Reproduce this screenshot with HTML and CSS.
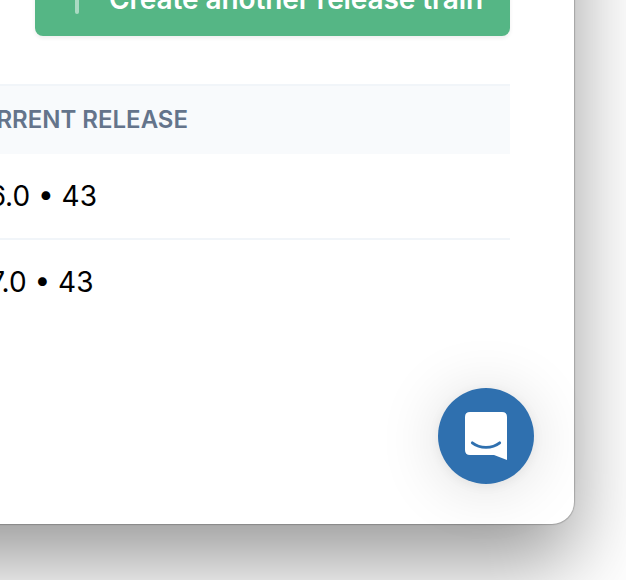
FILE: index.html
```html
<!DOCTYPE html>
<html lang="en">
<head>
<meta charset="utf-8">
<title>Release trains</title>
<link rel="stylesheet" href="styles.css">
</head>
<body>
<main class="window">
  <button class="create"><span class="plus"></span><span class="create-label">Create another release train</span></button>
  <section class="table">
    <div class="row head"><span class="cell cell-head">CURRENT RELEASE</span></div>
    <div class="row"><span class="cell cell-first">6.0 • 43</span></div>
    <div class="row last"><span class="cell cell-second">7.0 • 43</span></div>
  </section>
  <button class="chat" aria-label="Open chat">
    <svg width="42" height="48" viewBox="0 0 42 48">
      <path fill="#fff" d="M5 0H37Q42 0 42 5V48L29 43H5Q0 43 0 38V5Q0 0 5 0Z"/>
      <path fill="none" stroke="#2f70af" stroke-width="2.800" stroke-linecap="round" d="M7.300 30.800Q13 35.300 21 35.300T34.700 30.800"/>
    </svg>
  </button>
</main>
</body>
</html>
```
FILE: styles.css
```css
* { box-sizing: border-box; }
body {
  display: flow-root;
  margin: 0;
  height: 580px;
  overflow: hidden;
  background: #fff;
  font-family: Inter, sans-serif;
}
.window {
  display: flow-root;
  position: relative;
  width: 774px;
  height: 724px;
  margin: -200px 0 0 -200px;
  padding: 200px 64px 0 200px;
  background: #fff;
  border-radius: 0 0 22px 0;
  box-shadow: 0 0 1px 1px rgba(0, 0, 0, .2), 0 38px 80px rgba(0, 0, 0, .4);
}
button { border: 0; padding: 0; font: inherit; }
.create {
  display: flex;
  width: 475px;
  height: 80px;
  margin: -44px 0 0 35px;
  padding: 23px 27px 0 40px;
  justify-content: space-between;
  align-items: flex-start;
  background: #55b685;
  border-radius: 8px;
  box-shadow: 0 2px 4px rgba(0, 0, 0, .07);
  color: #fff;
}
.plus {
  width: 4px;
  height: 35px;
  border-radius: 2px;
  background: #aadac2;
}
.create-label {
  font-size: 28px;
  font-weight: 600;
  letter-spacing: -.1px;
  line-height: 40px;
  white-space: nowrap;
}
.table { width: 510px; margin-top: 48px; }
.row {
  display: flex;
  height: 86px;
  align-items: center;
  border-bottom: 2px solid #f1f5f9;
  font-size: 28px;
  line-height: 40px;
}
.head {
  height: 70px;
  border-top: 2px solid #f1f5f9;
  border-bottom: 0;
  background: #f8fafc;
  color: #64748b;
  font-size: 24px;
  font-weight: 600;
}
.last { height: 84px; border-bottom: 0; }
.cell {
  display: flex;
  justify-content: flex-end;
  white-space: nowrap;
  color: #000;
}
.cell-head { width: 188px; color: #64748b; }
.cell-first { width: 97px; }
.cell-second { width: 93.5px; }
.chat {
  position: absolute;
  right: 40px;
  bottom: 40px;
  display: flex;
  width: 96px;
  height: 96px;
  padding: 24px 0 0 27px;
  border-radius: 50%;
  background: #2f70af;
  box-shadow: 0 2px 12px rgba(0, 0, 0, .06), 0 4px 64px rgba(0, 0, 0, .14);
}
```
